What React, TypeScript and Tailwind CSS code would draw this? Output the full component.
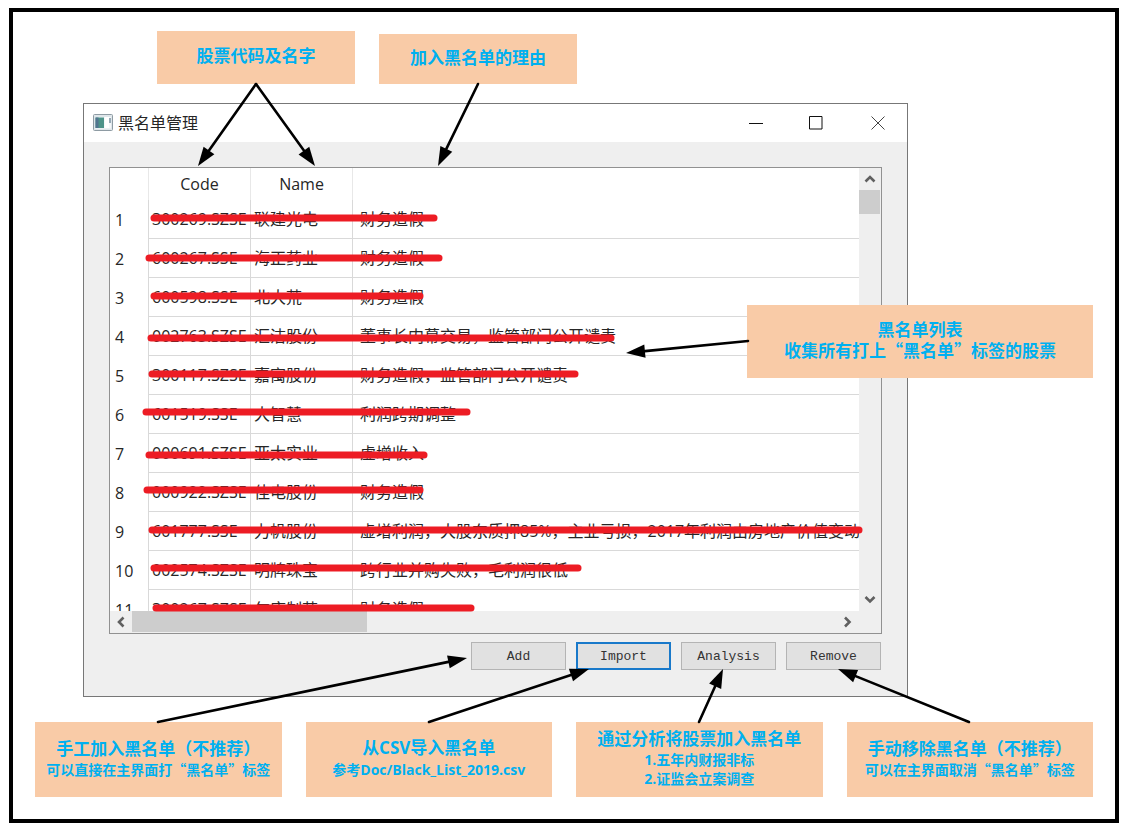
import React from "react";

type Row = { code: string; name: string; reason: string };

const rows: Row[] = [
  { code: "300269.SZSE", name: "联建光电", reason: "财务造假" },
  { code: "600267.SSE", name: "海正药业", reason: "财务造假" },
  { code: "600598.SSE", name: "北大荒", reason: "财务造假" },
  { code: "002763.SZSE", name: "汇洁股份", reason: "董事长内幕交易，监管部门公开谴责" },
  { code: "300117.SZSE", name: "嘉寓股份", reason: "财务造假，监管部门公开谴责" },
  { code: "601519.SSE", name: "大智慧", reason: "利润跨期调整" },
  { code: "000691.SZSE", name: "亚太实业", reason: "虚增收入" },
  { code: "000922.SZSE", name: "佳电股份", reason: "财务造假" },
  {
    code: "601777.SSE",
    name: "力帆股份",
    reason: "虚增利润，大股东质押85%，主业亏损，2017年利润由房地产价值变动支撑",
  },
  { code: "002574.SZSE", name: "明牌珠宝", reason: "跨行业并购失败，毛利润很低" },
  { code: "300267.SZSE", name: "尔康制药", reason: "财务造假" },
];

/* Marker strokes over the rows: start x, end x, y */
const strokes: [number, number, number][] = [
  [154, 434, 218],
  [149, 439, 258],
  [154, 420, 296],
  [151, 611, 338],
  [152, 575, 374],
  [146, 467, 412],
  [149, 424, 455],
  [147, 420, 490],
  [152, 859, 530],
  [154, 578, 568],
  [156, 471, 608],
];

/* Callout arrows: tail x, tail y, tip x, tip y */
const arrows: [number, number, number, number][] = [
  [256, 84, 198, 166],
  [256, 84, 315, 166],
  [478, 84, 438, 166],
  [748, 341, 626, 353],
  [158, 722, 467, 658],
  [429, 722, 589, 669],
  [699, 722, 723, 669],
  [969, 722, 838, 669],
];

function Arrow({ x1, y1, x2, y2 }: { x1: number; y1: number; x2: number; y2: number }) {
  const len = Math.hypot(x2 - x1, y2 - y1);
  const ux = (x2 - x1) / len;
  const uy = (y2 - y1) / len;
  const bx = x2 - ux * 19;
  const by = y2 - uy * 19;
  const points = `${x2},${y2} ${bx - uy * 6.6},${by + ux * 6.6} ${bx + uy * 6.6},${by - ux * 6.6}`;
  return (
    <g>
      <line x1={x1} y1={y1} x2={bx} y2={by} stroke="#000" strokeWidth="2.6" strokeLinecap="round" />
      <polygon points={points} fill="#000" />
    </g>
  );
}

function Callout({ className, children }: { className?: string; children: React.ReactNode }) {
  return (
    <div
      className={`flex flex-col items-center justify-center bg-[#f9cba7] pb-[5px] text-center font-bold whitespace-nowrap text-[#00b0f0] ${className ?? ""}`}
    >
      {children}
    </div>
  );
}

const cjk = "font-['Noto_Sans_CJK_SC',sans-serif]";
const mixed = "font-['Open_Sans','Noto_Sans_CJK_SC',sans-serif]";

function Heading({ children }: { children: React.ReactNode }) {
  return <p className={`text-[17px] leading-6 ${cjk}`}>{children}</p>;
}

function Chevron({ d }: { d: string }) {
  return (
    <svg width="12" height="12" viewBox="0 0 12 12" fill="none" stroke="#606060" strokeWidth="2.6">
      <path d={d} />
    </svg>
  );
}

const scrollButton = "flex size-[22px] shrink-0 items-center justify-center";
const pushButton =
  "h-7 w-[95px] bg-[#e1e1e1] pt-[2px] text-[13px] leading-4 text-[#333] font-['Liberation_Mono',monospace]";
const cell = "overflow-hidden border-r border-b border-[#d9d9d9] py-0";

export default function App() {
  return (
    <div className="relative bg-white pt-2 pr-[2px] pb-[2px] pl-[9px]">
      <main className="relative border-4 border-black">
        <div className="flex items-end gap-6 pt-[19px] pl-36">
          <Callout className="h-[53px] w-[198px]">
            <Heading>股票代码及名字</Heading>
          </Callout>
          <Callout className="h-[50px] w-[198px]">
            <Heading>加入黑名单的理由</Heading>
          </Callout>
        </div>

        <section
          className={`mt-[19px] mr-[207px] ml-[70px] border border-[#777] bg-[#efefef] text-base text-[#262626] ${mixed}`}
        >
          <header className="flex h-[38px] items-center bg-white pr-px pb-px pl-[9px]">
            <svg width="20" height="17" viewBox="0 0 20 17" className="mr-[5px]">
              <rect x="0.5" y="0.5" width="19" height="16" rx="1" fill="#dfe6ea" stroke="#8e9ba3" />
              <rect x="2" y="3" width="16" height="11.5" fill="#f5f8fa" />
              <rect x="2.5" y="3.5" width="8.5" height="10.5" fill="#4d9389" />
              <rect x="2.5" y="3.5" width="3" height="10.5" fill="#52758f" />
              <rect x="12" y="3" width="4" height="11" fill="#fff" />
              <path d="M17 4v5" stroke="#6e8798" strokeWidth="1.4" />
            </svg>
            <h1 className="flex-1 leading-6">黑名单管理</h1>
            <button aria-label="最小化" className="flex w-[60px] justify-center">
              <svg width="14" height="14" viewBox="0 0 14 14" stroke="#111" fill="none">
                <path d="M0 7.5h14" />
              </svg>
            </button>
            <button aria-label="最大化" className="flex w-[60px] justify-center">
              <svg width="14" height="14" viewBox="0 0 14 14" stroke="#111" fill="none">
                <path d="M.5 .5h12.500v12.500h-12.500z" />
              </svg>
            </button>
            <button aria-label="关闭" className="ml-1 flex w-[56px] justify-center">
              <svg width="14" height="14" viewBox="0 0 14 14" stroke="#444" fill="none">
                <path d="M.5 .5l13 13M13.500 .5l-13 13" />
              </svg>
            </button>
          </header>

          <div className="px-[25px] pt-[25px] pb-[26px]">
            <div className="grid grid-cols-[minmax(0,1fr)_22px] border border-[#919191] bg-[#efefef]">
              <div className="h-[443px] overflow-hidden bg-white">
                <table className="w-full table-fixed border-separate border-spacing-0 text-left whitespace-nowrap">
                  <colgroup>
                    <col className="w-[39px]" />
                    <col className="w-[102px]" />
                    <col className="w-[102px]" />
                    <col />
                  </colgroup>
                  <thead>
                    <tr className="h-8">
                      <td className="border-r border-[#e8e8e8]" />
                      <th className="border-r border-[#e8e8e8] p-0 text-center font-normal">Code</th>
                      <th className="border-r border-[#e8e8e8] p-0 text-center font-normal">Name</th>
                      <td />
                    </tr>
                  </thead>
                  <tbody>
                    {rows.map((row, i) => (
                      <tr key={row.code} className="h-[39px]">
                        <th className="border-r border-[#d9d9d9] py-0 pr-0 pl-[5px] font-normal">{i + 1}</th>
                        <td className={`${cell} pr-0 pl-[3px]`}>{row.code}</td>
                        <td className={`${cell} pr-0 pl-[3px]`}>{row.name}</td>
                        <td className="overflow-hidden border-b border-[#d9d9d9] py-0 pr-0 pl-[7px]">{row.reason}</td>
                      </tr>
                    ))}
                  </tbody>
                </table>
              </div>
              <div className="flex flex-col">
                <button aria-label="向上滚动" className={scrollButton}>
                  <Chevron d="M1.500 8.500L6 4l4.500 4.500" />
                </button>
                <div className="flex-1">
                  <div className="h-6 w-[21px] bg-[#cdcdcd]" />
                </div>
                <button aria-label="向下滚动" className={scrollButton}>
                  <Chevron d="M1.500 3L6 7.500L10.500 3" />
                </button>
              </div>
              <div className="flex h-[22px]">
                <button aria-label="向左滚动" className={scrollButton}>
                  <Chevron d="M8.500 1.500L4 6l4.500 4.500" />
                </button>
                <div className="flex-1">
                  <div className="h-[21px] w-1/3 bg-[#cdcdcd]" />
                </div>
                <button aria-label="向右滚动" className={scrollButton}>
                  <Chevron d="M3 1.500L7.500 6l-4.500 4.500" />
                </button>
              </div>
            </div>

            <div className="mt-2 flex justify-end gap-[10px] pr-px">
              <button className={`${pushButton} border border-[#b4b4b4]`}>Add</button>
              <button className={`${pushButton} border-2 border-[#1979ca]`}>Import</button>
              <button className={`${pushButton} border border-[#b4b4b4]`}>Analysis</button>
              <button className={`${pushButton} border border-[#b4b4b4]`}>Remove</button>
            </div>
          </div>
        </section>

        <div className="mt-[25px] mb-[22px] grid grid-cols-4 gap-6 px-[22px] text-sm leading-[19px]">
          <Callout className="h-[75px]">
            <Heading>手工加入黑名单（不推荐）</Heading>
            <p className={cjk}>可以直接在主界面打“黑名单”标签</p>
          </Callout>
          <Callout className="h-[75px]">
            <p className={`text-[17px] leading-6 ${mixed}`}>从CSV导入黑名单</p>
            <p className={mixed}>参考Doc/Black_List_2019.csv</p>
          </Callout>
          <Callout className="h-[75px]">
            <Heading>通过分析将股票加入黑名单</Heading>
            <p className={mixed}>1.五年内财报非标</p>
            <p className={mixed}>2.证监会立案调查</p>
          </Callout>
          <Callout className="h-[75px]">
            <Heading>手动移除黑名单（不推荐）</Heading>
            <p className={cjk}>可以在主界面取消“黑名单”标签</p>
          </Callout>
        </div>

        <svg
          className="pointer-events-none absolute inset-0 size-full"
          viewBox="13 12 1102 807"
          preserveAspectRatio="none"
          aria-hidden="true"
        >
          {strokes.map(([x1, x2, y]) => (
            <line key={y} x1={x1} y1={y} x2={x2} y2={y} stroke="#ed1c24" strokeWidth="7" strokeLinecap="round" />
          ))}
        </svg>

        <Callout className="absolute top-[293px] right-[22px] h-[73px] w-[346px] leading-[21px]">
          <p className={`text-[17px] ${cjk}`}>黑名单列表</p>
          <p className={`text-[17px] ${cjk}`}>收集所有打上“黑名单”标签的股票</p>
        </Callout>

        <svg
          className="pointer-events-none absolute inset-0 size-full"
          viewBox="13 12 1102 807"
          preserveAspectRatio="none"
          aria-hidden="true"
        >
          {arrows.map(([x1, y1, x2, y2]) => (
            <Arrow key={`${x2}-${y2}`} x1={x1} y1={y1} x2={x2} y2={y2} />
          ))}
        </svg>
      </main>
    </div>
  );
}
